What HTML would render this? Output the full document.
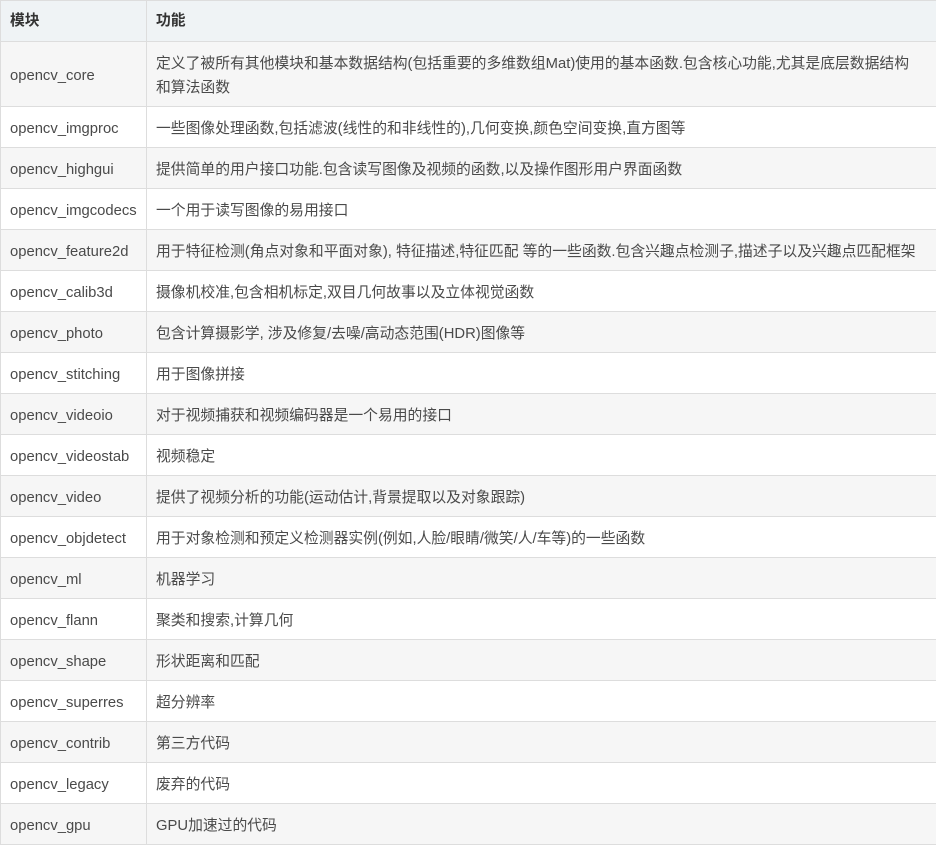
<!DOCTYPE html>
<html><head><meta charset="utf-8"><style>
body{margin:0;background:#fff;width:936px;height:846px;overflow:hidden}
table{border-collapse:collapse;position:absolute;left:0;top:0;width:960px;font-family:"Liberation Sans","Noto Sans CJK SC",sans-serif;font-size:14.8px;color:#4a4a4a}
td,th{border:1px solid #ddd;padding:3px 9px 0;text-align:left;line-height:24px;white-space:nowrap;box-sizing:border-box}
th{background:#eff3f5;font-weight:bold;color:#333;height:41px;padding-top:0}
td{height:41px}
tr:nth-child(even) td{background:#f6f6f6}
td:first-child,th:first-child{width:146px}
</style></head><body>
<table>
<tr><th>模块</th><th>功能</th></tr>
<tr><td style="height:65px">opencv_core</td><td style="height:65px">定义了被所有其他模块和基本数据结构(包括重要的多维数组Mat)使用的基本函数.包含核心功能,尤其是底层数据结构<br>和算法函数</td></tr>
<tr><td>opencv_imgproc</td><td>一些图像处理函数,包括滤波(线性的和非线性的),几何变换,颜色空间变换,直方图等</td></tr>
<tr><td>opencv_highgui</td><td>提供简单的用户接口功能.包含读写图像及视频的函数,以及操作图形用户界面函数</td></tr>
<tr><td>opencv_imgcodecs</td><td>一个用于读写图像的易用接口</td></tr>
<tr><td>opencv_feature2d</td><td>用于特征检测(角点对象和平面对象), 特征描述,特征匹配 等的一些函数.包含兴趣点检测子,描述子以及兴趣点匹配框架</td></tr>
<tr><td>opencv_calib3d</td><td>摄像机校准,包含相机标定,双目几何故事以及立体视觉函数</td></tr>
<tr><td>opencv_photo</td><td>包含计算摄影学, 涉及修复/去噪/高动态范围(HDR)图像等</td></tr>
<tr><td>opencv_stitching</td><td>用于图像拼接</td></tr>
<tr><td>opencv_videoio</td><td>对于视频捕获和视频编码器是一个易用的接口</td></tr>
<tr><td>opencv_videostab</td><td>视频稳定</td></tr>
<tr><td>opencv_video</td><td>提供了视频分析的功能(运动估计,背景提取以及对象跟踪)</td></tr>
<tr><td>opencv_objdetect</td><td>用于对象检测和预定义检测器实例(例如,人脸/眼睛/微笑/人/车等)的一些函数</td></tr>
<tr><td>opencv_ml</td><td>机器学习</td></tr>
<tr><td>opencv_flann</td><td>聚类和搜索,计算几何</td></tr>
<tr><td>opencv_shape</td><td>形状距离和匹配</td></tr>
<tr><td>opencv_superres</td><td>超分辨率</td></tr>
<tr><td>opencv_contrib</td><td>第三方代码</td></tr>
<tr><td>opencv_legacy</td><td>废弃的代码</td></tr>
<tr><td>opencv_gpu</td><td>GPU加速过的代码</td></tr>
</table>
</body></html>
